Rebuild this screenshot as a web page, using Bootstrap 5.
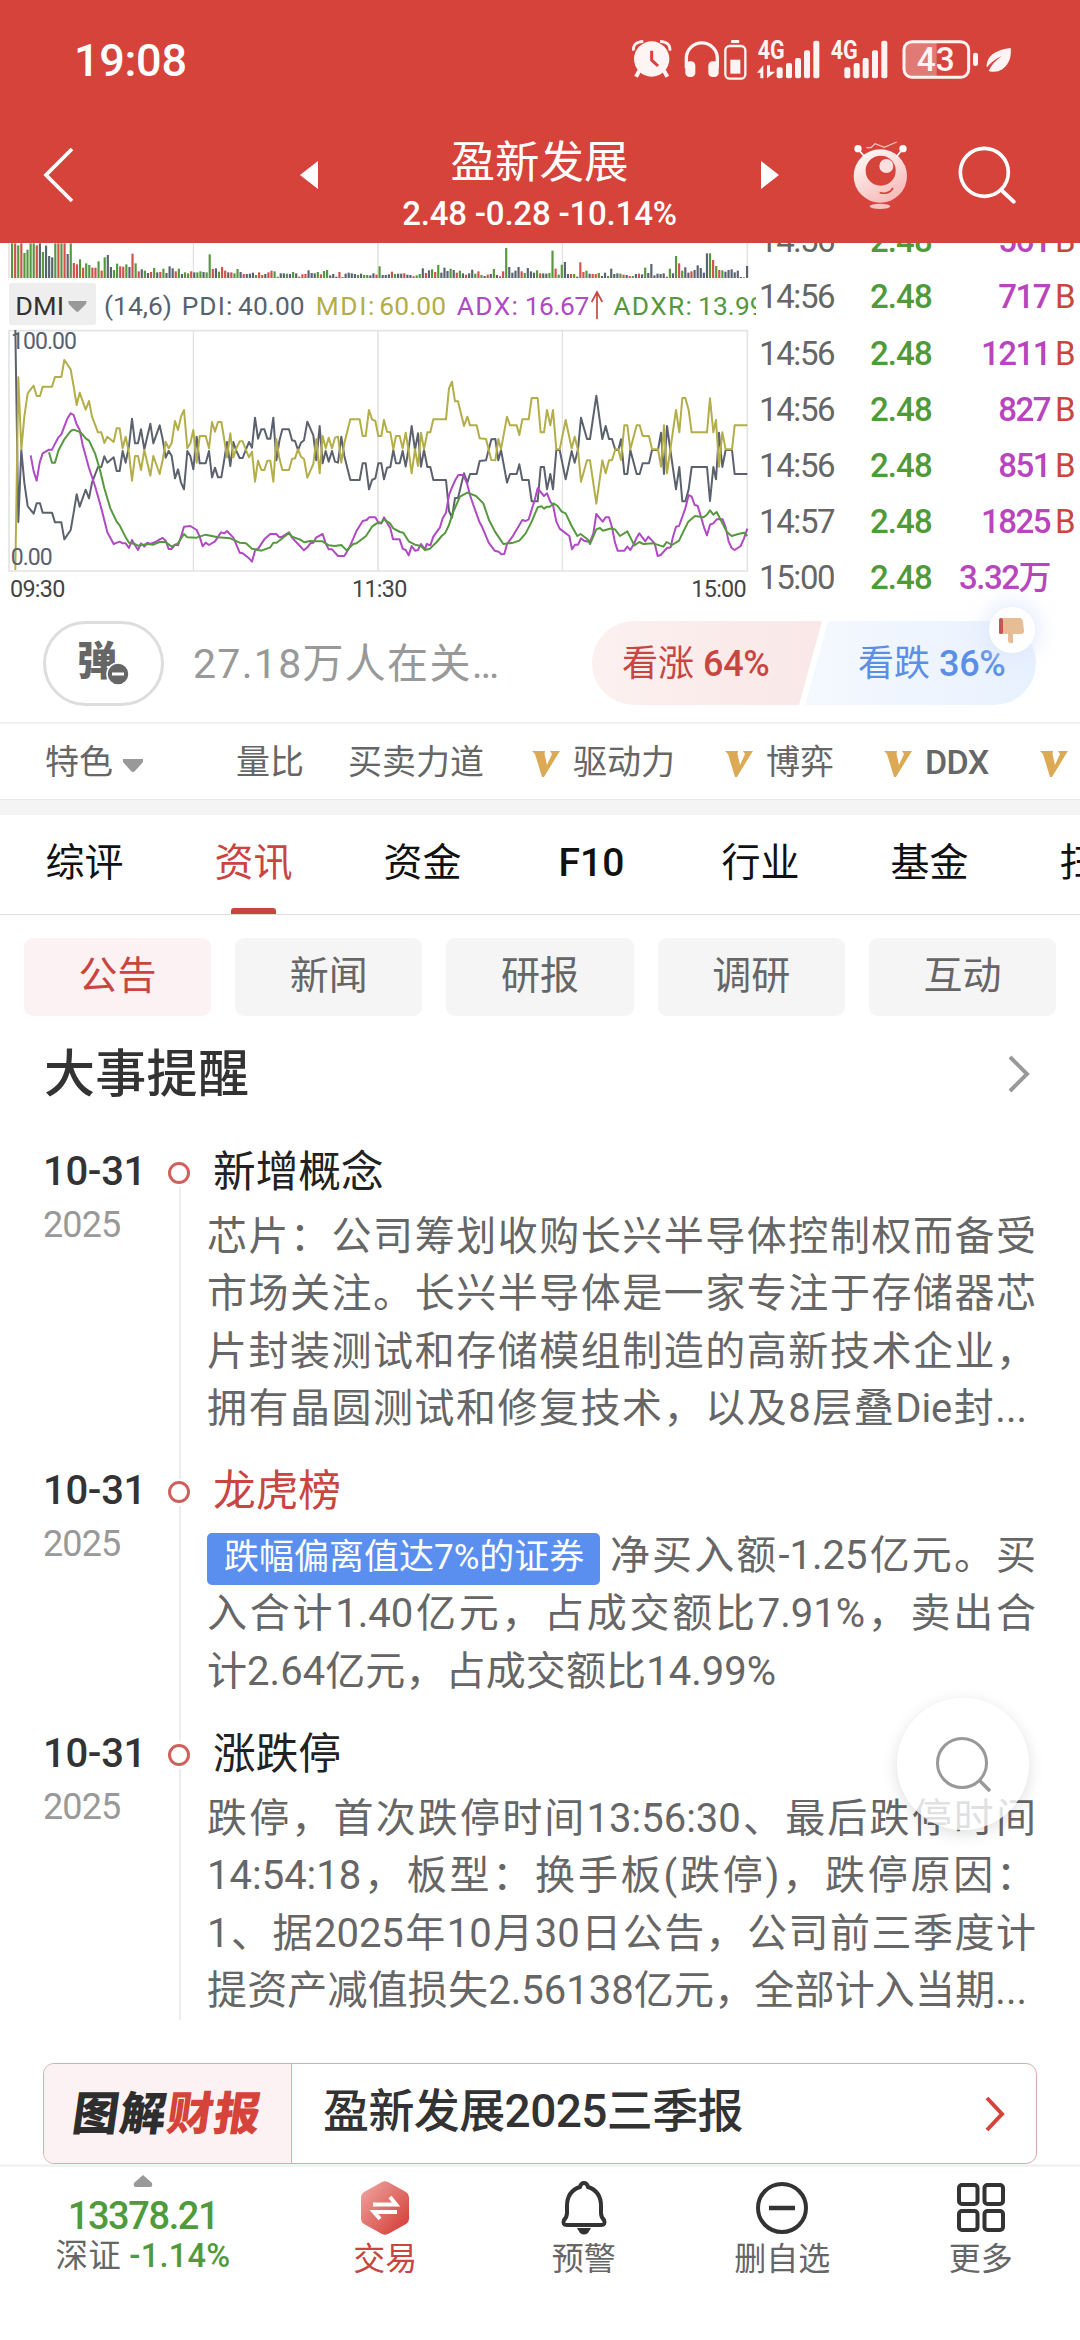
<!DOCTYPE html>
<html lang="zh-CN">
<head>
<meta charset="utf-8">
<meta name="viewport" content="width=device-width, initial-scale=1">
<title>盈新发展</title>
<link href="https://cdn.jsdelivr.net/npm/bootstrap@5.3.0/dist/css/bootstrap.min.css" rel="stylesheet">
<style>
body{font-family:Roboto,"Noto Sans CJK SC",sans-serif;width:1080px;height:2340px;overflow:hidden;background:#fff;color:#333;line-height:1;text-spacing-trim:space-all}
svg{display:block;flex:none}
svg text{font-family:Roboto,"Noto Sans CJK SC",sans-serif}
.red-head{height:243px;background:#d5433b;color:#fff;flex:none}
.status{height:120px;padding:41px 20px 0 74px}
.clock{font-size:45px;font-weight:500;letter-spacing:-.3px;line-height:40px}
.status svg{margin-top:-1px;overflow:visible}
.titlebar{height:123px;padding-left:43px}
.stock-name{font-size:44.5px;line-height:48px}
.stock-quote{font-size:33px;font-weight:500;line-height:34px;margin-top:10px;letter-spacing:-.2px;white-space:nowrap}
.market{height:363px;flex:none}
.ticks{width:320px;overflow:hidden;font-size:33px;font-weight:500}
.tick-row{height:56.1px;line-height:56.1px;flex:none;white-space:nowrap}
.t-time{width:111px;letter-spacing:-1.4px;color:#666;font-weight:400;margin-left:-1px}
.t-price{width:70px;color:#4f9a3b;letter-spacing:-.9px}
.t-vol{width:110px;text-align:right;color:#b845bd;letter-spacing:-1.5px}
.t-side{color:#c8463f;padding-left:5px;font-weight:400}
.vote-row{height:116px;padding:15px 43px 17px;flex:none}
.bullet-btn{width:121px;height:85px;border:3px solid #ddd;border-radius:43px}
.watchers{font-size:41px;color:#999;margin-left:29px;width:399px;letter-spacing:1.3px;white-space:nowrap;padding-top:3px}
.vote{height:84px;font-size:36px;line-height:87px;white-space:nowrap}
.vote-up{width:230px;height:84px;background:linear-gradient(90deg,#fcf0f0,#f9e8e7);color:#c8463f;border-radius:42px 0 0 42px;clip-path:polygon(0 0,100% 0,calc(100% - 23px) 100%,0 100%);padding-left:30px}
.vote-down{width:231px;height:84px;margin-left:-17px;background:linear-gradient(90deg,#f5f9ff,#e8f1fe);color:#5b8fe6;border-radius:0 42px 42px 0;clip-path:polygon(23px 0,100% 0,100% 100%,0 100%);padding-left:53px}
.vote b{font-weight:500;letter-spacing:-.3px;margin-left:9px}
.thumb{width:46px;height:46px;top:-14px;right:1px;border-radius:50%;background:#fff;box-shadow:0 0 16px 8px rgba(220,230,252,.55)}
.feat{height:78px;border-top:2px solid #f0f0f0;border-bottom:1px solid #ebebeb;font-size:34px;color:#666;padding-left:45px;white-space:nowrap;flex:none;overflow:hidden}
.vbar{width:1px;height:41px;background:#e8e8e8}
.feat .caret{margin:8px 46px 0 9px}
.feat .vip{margin:4px 13px 0 48px}
.ddx{font-weight:500;letter-spacing:-.6px}
.band{height:15px;background:#f4f4f4;flex:none}
.tabs-top{height:100px;border-bottom:1px solid #ddd;flex:none;overflow:hidden}
.tab-i{width:169px;flex:none;font-size:39px;line-height:97px;color:#111;text-align:center;position:relative;white-space:nowrap}
.tab-i.on{color:#c8463f}
.tab-i.on::after{content:"";position:absolute;left:62px;bottom:0;width:45px;height:6px;border-radius:3px 3px 0 0;background:#c8463f}
.chips{padding:23px 24px 0;gap:24px;flex:none}
.chip{flex:1 1 0;height:78px;border-radius:9px;background:#f5f5f5;color:#666;font-size:39px;line-height:77px;text-align:center}
.chip.on{background:#fdf2f3;color:#c8463f}
.sec-head{height:121px;padding:0 50px 5px 44px;flex:none}
.sec-title{font-size:51px;font-weight:500;color:#333;line-height:1;letter-spacing:.3px}
.tl-item{padding-bottom:18.5px}
.tl-date{width:164px;padding-left:43px;flex:none}
.tl-md{font-size:40px;font-weight:500;line-height:66px;padding-top:2px;letter-spacing:-.3px}
.tl-y{font-size:36px;color:#999;line-height:36px;letter-spacing:-.9px;padding-top:2px}
.tl-rail{width:32px;flex:none;position:relative}
.tl-rail::before{content:"";position:absolute;left:15px;top:50px;bottom:-41px;width:2px;background:#ececec}
.tl-item:last-child{padding-bottom:0}
.tl-item:last-child .tl-rail::before{bottom:0}
.tl-dot{position:absolute;left:4px;top:25px;width:22px;height:22px;border:3px solid #d0605c;border-radius:50%;background:#fff}
.tl-body{width:829px;margin-left:11px}
.tl-title{font-size:42.7px;line-height:66px;padding:2px 0 0 6px;color:#222;height:71px}
.tl-item:first-child .tl-title{height:70.5px}
.ln{display:block;height:57.6px;line-height:58px;font-size:40px;color:#666;text-align:justify;text-align-last:justify;white-space:nowrap}
.ln.short{width:820px}
.ln.end{width:569px}
.tagline{display:flex;align-items:center}
.blue-tag{background:#5a8ff0;color:#fff;font-size:35px;line-height:50px;height:52px;width:393px;border-radius:5px;padding:0 17px;flex:none;text-align-last:justify;margin-top:5px}
.tagline .rest{flex:1;margin-left:10px}
.report{margin:43px 43px 0;height:101px;border:1.5px solid #d6aeab;border-radius:11px;flex:none;overflow:hidden}
.report-tag{width:248px;height:100%;background:#fdf2f3;border-right:1px solid #d6aeab;font-size:46px;font-weight:900;color:#2e2e2e}
.skewed{transform:skewX(-8deg);letter-spacing:1.2px}
.skewed em{font-style:normal;color:#d5433b}
.report-title{font-size:46px;font-weight:500;margin-left:31px;width:662px;letter-spacing:-.6px;line-height:1;padding-bottom:5px}
.botnav{border-top:3px solid #f3f3f3;height:175px;flex:none}
.idx{width:286px;padding-top:8px}
.idx-val{font-size:38px;font-weight:500;color:#4f9a3b;line-height:44px;letter-spacing:-1.4px;margin-top:7px}
.idx-chg{font-size:32.5px;line-height:36px;color:#666;white-space:nowrap;letter-spacing:.3px}
.idx-chg b{font-weight:500;color:#4f9a3b}
.nav-b{width:198.5px;font-size:32px;color:#666;padding-top:13px}
.nav-b span{margin-top:5px;line-height:37px}
.float-search{position:absolute;left:897px;top:1698px;width:132px;height:132px;border-radius:50%;background:rgba(255,255,255,.8);box-shadow:0 4px 16px rgba(0,0,0,.13)}
</style>
<script src="https://cdn.jsdelivr.net/npm/bootstrap@5.3.0/dist/js/bootstrap.bundle.min.js"></script>
</head>
<body class="d-flex flex-column position-relative">
<header class="red-head">
  <div class="status d-flex justify-content-between">
    <span class="clock">19:08</span>
    <svg width="440" height="60" viewBox="0 60 1320 180">
      <g fill="#fff4f4" stroke="none">
        <circle cx="95" cy="117" r="53"/>
        <path d="M40 92Q38 66 70 64M150 92Q152 66 120 64" fill="none" stroke="#fff4f4" stroke-width="8"/>
        <path d="M58 152 48 170M132 152 142 170" stroke="#fff4f4" stroke-width="12"/>
        <path d="M95 92V120L114 138" fill="none" stroke="#d5433b" stroke-width="9"/>
        <path d="M199 145V115a46 46 0 0 1 93 0v30" fill="none" stroke="#fff4f4" stroke-width="10"/>
        <rect x="196" y="124" width="30" height="47" rx="13"/><rect x="265" y="124" width="31" height="47" rx="13"/>
        <rect x="316" y="78" width="60" height="98" rx="13" fill="none" stroke="#fff4f4" stroke-width="7"/><rect x="333" y="60" width="25" height="9" rx="3"/><rect x="331" y="119" width="30" height="42"/>
        <rect x="470" y="142" width="18" height="33" rx="6"/><rect x="498" y="129" width="18" height="46" rx="6"/><rect x="525" y="114" width="18" height="61" rx="6"/><rect x="552" y="91" width="18" height="84" rx="6"/><rect x="580" y="62" width="18" height="113" rx="6"/>
        <path d="M411 158 430 136V175H421V158ZM441 136V175L466 155H450V136Z"/>
        <rect x="673" y="142" width="18" height="33" rx="6"/><rect x="701" y="129" width="18" height="46" rx="6"/><rect x="728" y="114" width="18" height="61" rx="6"/><rect x="756" y="91" width="18" height="84" rx="6"/><rect x="784" y="62" width="18" height="113" rx="6"/>
        <path d="M857 66H950V172H870Q852 168 852 150V84Z" fill="#e17a74"/>
        <rect x="852" y="65" width="194" height="107" rx="24" fill="none" stroke="#fff4f4" stroke-width="9"/><rect x="1059" y="98" width="15" height="40" rx="7"/>
        <path d="M1172 84Q1112 92 1102 125 1098 138 1101 142 1120 118 1146 108 1118 126 1106 153 1128 160 1147 148C1168 132 1175 110 1172 84Z"/>
        <text x="413" y="118" font-size="75" font-weight="700" textLength="81" lengthAdjust="spacingAndGlyphs">4G</text>
        <text x="632" y="118" font-size="75" font-weight="700" textLength="81" lengthAdjust="spacingAndGlyphs">4G</text>
        <text x="890" y="154" font-size="102" font-weight="500" textLength="114" lengthAdjust="spacingAndGlyphs">43</text>
      </g>
    </svg>
  </div>
  <div class="titlebar d-flex align-items-start">
    <svg width="32" height="58" viewBox="0 0 32 58" style="margin-top:26px"><path d="M29 3 3 29 29 55" fill="none" stroke="#fff" stroke-width="3.8"/></svg>
    <svg width="18" height="28" viewBox="0 0 18 28" style="margin:41px 0 0 225px"><path d="M18 0V28L0 14Z" fill="#fff"/></svg>
    <div class="text-center" style="width:443px;padding-top:19px">
      <div class="stock-name">盈新发展</div>
      <div class="stock-quote">2.48 -0.28 -10.14%</div>
    </div>
    <svg width="18" height="28" viewBox="0 0 18 28" style="margin-top:41px"><path d="M0 0V28L18 14Z" fill="#fff"/></svg>
    <svg width="56" height="70" viewBox="696 364 168 210" style="margin:21px 0 0 74px">
      <defs><linearGradient id="bot" x1="0" y1="0" x2=".6" y2="1"><stop offset="0" stop-color="#fff"/><stop offset="1" stop-color="#f6bcba"/></linearGradient></defs>
      <circle cx="778" cy="469" r="80" fill="url(#bot)"/><circle cx="779" cy="453" r="45" fill="#d5433b"/><circle cx="796" cy="439" r="21" fill="#fbe0df"/>
      <path d="M776 519Q804 526 816 505" fill="none" stroke="#d5433b" stroke-width="5"/>
      <circle cx="711" cy="387" r="11" fill="#fff"/><circle cx="846" cy="387" r="11" fill="#fff"/><path d="M716 394 732 412M840 394 826 412" stroke="#fff" stroke-width="5"/>
      <path d="M736 384H750L762 372 790 383 827 367" fill="none" stroke="#f6c4c2" stroke-width="4"/><ellipse cx="777" cy="560" rx="31" ry="8" fill="#f6c4c2"/>
    </svg>
    <svg width="58" height="60" viewBox="1012 376 174 180" style="margin:25px 0 0 49px"><circle cx="1091" cy="458" r="72" fill="none" stroke="#fff" stroke-width="11"/><path d="M1143 512 1179 546" stroke="#fff" stroke-width="12" stroke-linecap="round"/></svg>
  </div>
</header>

<section class="market d-flex">
  <svg id="chart" width="760" height="363" viewBox="0 9 2280 1089">
    <g stroke="#e4e4e4" stroke-width="5" fill="none"><path d="M27 272H2242V993H27ZM1134 272V993M1134 9V114M27 9V114M2242 9V114"/><path d="M580 9V114M580 272V993M1687 9V114M1687 272V993" stroke-width="3" stroke="#ddd"/></g>
    <g id="bars"></g>
    <rect x="27" y="129" width="261" height="126" rx="8" fill="#eee"/>
    <path d="M205 183H260L258 192 236 214Q232 217 228 214L206 192Z" fill="#999"/>
    <g font-size="79">
      <text x="46" y="224" fill="#333" textLength="146" lengthAdjust="spacingAndGlyphs">DMI</text>
      <g fill="#58626f"><text x="312" y="224" textLength="204">(14,6)</text><text x="545" y="224" textLength="152">PDI:</text><text x="714" y="224" textLength="200">40.00</text></g>
      <g fill="#b3ad48"><text x="947" y="224" textLength="176">MDI:</text><text x="1138" y="224" textLength="200">60.00</text></g>
      <g fill="#b04ac4"><text x="1370" y="224" textLength="184">ADX:</text><text x="1574" y="224" textLength="194">16.67</text></g>
      <g fill="#56983e"><text x="1840" y="224" textLength="236">ADXR:</text><text x="2094" y="224" textLength="200">13.99</text></g>
    </g>
    <rect x="2268" y="140" width="12" height="110" fill="#fff"/>
    <path d="M1791 237V156M1775 186 1791 156 1807 186" fill="none" stroke="#c8463f" stroke-width="5"/>
    <g fill="none" stroke-width="6" stroke-linejoin="round" id="lines"></g>
    <g fill="#58626f" font-size="69"><text x="33" y="326" textLength="198">100.00</text><text x="32" y="974" textLength="126">0.00</text></g>
    <g fill="#444" font-size="70"><text x="30" y="1071" textLength="166">09:30</text><text x="1056" y="1071" textLength="166">11:30</text><text x="2074" y="1071" textLength="166">15:00</text></g>
  </svg>
  <div class="ticks d-flex flex-column justify-content-end">
    <div class="tick-row d-flex"><span class="t-time">14:56</span><span class="t-price">2.48</span><span class="t-vol">561</span><span class="t-side">B</span></div>
    <div class="tick-row d-flex"><span class="t-time">14:56</span><span class="t-price">2.48</span><span class="t-vol">717</span><span class="t-side">B</span></div>
    <div class="tick-row d-flex"><span class="t-time">14:56</span><span class="t-price">2.48</span><span class="t-vol">1211</span><span class="t-side">B</span></div>
    <div class="tick-row d-flex"><span class="t-time">14:56</span><span class="t-price">2.48</span><span class="t-vol">827</span><span class="t-side">B</span></div>
    <div class="tick-row d-flex"><span class="t-time">14:56</span><span class="t-price">2.48</span><span class="t-vol">851</span><span class="t-side">B</span></div>
    <div class="tick-row d-flex"><span class="t-time">14:57</span><span class="t-price">2.48</span><span class="t-vol">1825</span><span class="t-side">B</span></div>
    <div class="tick-row d-flex"><span class="t-time">15:00</span><span class="t-price">2.48</span><span class="t-vol">3.32万</span></div>
  </div>
</section>

<section class="vote-row d-flex">
  <div class="bullet-btn d-flex align-items-center justify-content-center">
    <svg width="54" height="48" viewBox="0 0 54 48"><text x="0" y="35" font-size="40" font-weight="900" fill="#666">弹</text><circle cx="41" cy="34" r="11" fill="#666" stroke="#fff" stroke-width="1.5"/><path d="M35 34H47" stroke="#fff" stroke-width="3"/></svg>
  </div>
  <div class="watchers align-self-center">27.18万人在关…</div>
  <div class="vote d-flex position-relative">
    <div class="vote-up">看涨<b>64%</b></div>
    <div class="vote-down">看跌<b>36%</b></div>
    <div class="thumb position-absolute d-flex align-items-center justify-content-center">
      <svg width="26" height="28" viewBox="0 0 26 28"><path d="M4 2H21Q23 2 24 6L25 15Q25 18 22 18H14V26Q14 28 11 27 9 27 9 24V18H4Z" fill="#e6bd94"/><rect x="0" y="2" width="4" height="16" rx="1.5" fill="#c8545a"/></svg>
    </div>
  </div>
</section>

<section class="feat d-flex align-items-center">
  <span>特色</span>
  <svg class="caret" width="22" height="14" viewBox="0 0 22 14"><path d="M1 0H21V3L13 12Q11 14 9 12L1 3Z" fill="#999"/></svg>
  <span class="vbar"></span>
  <span style="margin-left:46px">量比</span><span style="margin-left:44px">买卖力道</span>
  <svg class="vip" width="28" height="26" viewBox="0 0 28 26"><path id="v" d="M0 0H13L12.500 3 15 14 20 3 18 0H28L26 3 12 26H10L3 3Z" fill="#dcaa55"/></svg><span>驱动力</span>
  <svg class="vip" style="margin-left:50px" width="28" height="26" viewBox="0 0 28 26"><use href="#v"/></svg><span>博弈</span>
  <svg class="vip" style="margin-left:50px" width="28" height="26" viewBox="0 0 28 26"><use href="#v"/></svg><span class="ddx">DDX</span>
  <svg class="vip" style="margin-left:51px" width="28" height="26" viewBox="0 0 28 26"><use href="#v"/></svg>
</section>
<div class="band"></div>

<nav class="tabs-top d-flex">
  <div class="tab-i">综评</div><div class="tab-i on">资讯</div><div class="tab-i">资金</div><div class="tab-i" style="font-weight:500">F10</div><div class="tab-i">行业</div><div class="tab-i">基金</div><div class="tab-i">扫雷</div>
</nav>
<div class="chips d-flex">
  <div class="chip on">公告</div><div class="chip">新闻</div><div class="chip">研报</div><div class="chip">调研</div><div class="chip">互动</div>
</div>
<div class="sec-head d-flex align-items-center justify-content-between">
  <h2 class="sec-title m-0">大事提醒</h2>
  <svg width="22" height="38" viewBox="0 0 22 38"><path d="M2 2 19 19 2 36" fill="none" stroke="#999" stroke-width="4"/></svg>
</div>

<section class="flex-shrink-0">
  <article class="tl-item d-flex">
    <div class="tl-date"><div class="tl-md">10-31</div><div class="tl-y">2025</div></div>
    <div class="tl-rail"><i class="tl-dot"></i></div>
    <div class="tl-body">
      <div class="tl-title">新增概念</div>
      <span class="ln">芯片：公司筹划收购长兴半导体控制权而备受</span>
      <span class="ln">市场关注。长兴半导体是一家专注于存储器芯</span>
      <span class="ln">片封装测试和存储模组制造的高新技术企业，</span>
      <span class="ln short">拥有晶圆测试和修复技术，以及8层叠Die封...</span>
    </div>
  </article>
  <article class="tl-item d-flex">
    <div class="tl-date"><div class="tl-md">10-31</div><div class="tl-y">2025</div></div>
    <div class="tl-rail"><i class="tl-dot"></i></div>
    <div class="tl-body">
      <div class="tl-title" style="color:#c8463f">龙虎榜</div>
      <span class="ln tagline"><span class="blue-tag">跌幅偏离值达7%的证券</span><span class="rest">净买入额-1.25亿元。买</span></span>
      <span class="ln">入合计1.40亿元，占成交额比7.91%，卖出合</span>
      <span class="ln end">计2.64亿元，占成交额比14.99%</span>
    </div>
  </article>
  <article class="tl-item d-flex">
    <div class="tl-date"><div class="tl-md">10-31</div><div class="tl-y">2025</div></div>
    <div class="tl-rail"><i class="tl-dot"></i></div>
    <div class="tl-body">
      <div class="tl-title">涨跌停</div>
      <span class="ln">跌停，首次跌停时间13:56:30、最后跌停时间</span>
      <span class="ln">14:54:18，板型：换手板(跌停)，跌停原因：</span>
      <span class="ln">1、据2025年10月30日公告，公司前三季度计</span>
      <span class="ln short">提资产减值损失2.56138亿元，全部计入当期...</span>
    </div>
  </article>
</section>

<div class="report d-flex align-items-center">
  <div class="report-tag d-flex align-items-center justify-content-center"><div class="skewed">图解<em>财报</em></div></div>
  <div class="report-title">盈新发展2025三季报</div>
  <svg width="20" height="36" viewBox="0 0 20 36"><path d="M2 2 17 18 2 34" fill="none" stroke="#d5433b" stroke-width="4"/></svg>
</div>

<nav class="botnav d-flex">
  <div class="idx d-flex flex-column align-items-center">
    <svg width="20" height="12" viewBox="0 0 20 12"><path d="M10 0 19 8Q20 12 17 12H3Q0 12 1 8Z" fill="#999"/></svg>
    <div class="idx-val">13378.21</div>
    <div class="idx-chg">深证 <b>-1.14%</b></div>
  </div>
  <div class="nav-b d-flex flex-column align-items-center" style="color:#c8463f">
    <svg width="54" height="56" viewBox="0 0 54 56"><defs><linearGradient id="hx" x1="0" y1="0" x2="1" y2="1"><stop offset="0" stop-color="#efa9a5"/><stop offset="1" stop-color="#d3362f"/></linearGradient></defs><path d="M24 2Q27 .5 30 2L48 12Q51 14 51 17V39Q51 42 48 44L30 54Q27 55.500 24 54L6 44Q3 42 3 39V17Q3 14 6 12Z" fill="url(#hx)"/><path d="M15 24.500H38L32 17M39 32H16L22 39" fill="none" stroke="#fff" stroke-width="4"/></svg>
    <span>交易</span>
  </div>
  <div class="nav-b d-flex flex-column align-items-center">
    <svg width="54" height="56" viewBox="0 0 54 56"><path d="M27 3Q30 3 31 7C40 10 44 17 44 26V33Q44 37 47 40 49 45 44 45H10Q5 45 7 40 10 37 10 33V26C10 17 14 10 23 7Q24 3 27 3Z" fill="none" stroke="#333" stroke-width="4"/><path d="M20 48H34L31 53Q27 56 23 53Z" fill="#333"/></svg>
    <span>预警</span>
  </div>
  <div class="nav-b d-flex flex-column align-items-center">
    <svg width="54" height="56" viewBox="0 0 54 56"><circle cx="27" cy="28" r="24" fill="none" stroke="#333" stroke-width="4"/><path d="M14 28H40" stroke="#333" stroke-width="4.500"/></svg>
    <span>删自选</span>
  </div>
  <div class="nav-b d-flex flex-column align-items-center">
    <svg width="54" height="56" viewBox="0 0 54 56"><g fill="none" stroke="#333" stroke-width="4"><rect x="5" y="5" width="18.500" height="19" rx="3"/><rect x="30.500" y="5" width="18.500" height="19" rx="3"/><rect x="5" y="31" width="18.500" height="19" rx="3"/><rect x="30.500" y="31" width="18.500" height="19" rx="3"/></g></svg>
    <span>更多</span>
  </div>
</nav>

<div class="float-search d-flex align-items-center justify-content-center">
  <svg width="62" height="62" viewBox="0 0 62 62"><circle cx="30" cy="30" r="24.500" fill="none" stroke="#999" stroke-width="3"/><path d="M48 48 58 58" stroke="#999" stroke-width="3.500"/></svg>
</div>

<script>
// Volume bars: side letter (r = up, g = down, s = flat) and height
const vol="g104 r104 g98 r104 g75 g85 g104 g104 r98 s104 g78 s97 s66 s62 g104 r104 g104 r104 s72 g104 r45 r41 g56 r31 g44 g39 r31 r31 g50 r22 g62 s69 s33 g24 g43 r35 r34 g41 s33 r73 g44 r20 s26 g22 s15 r18 g30 s17 r18 g28 s15 s35 s29 r20 g28 s12 g17 g14 r20 s17 g17 g20 s18 g17 g71 r27 s29 g19 r33 r22 s17 r17 g14 g27 s18 r12 s12 s13 s16 g9 r17 r9 s12 r17 r22 g20 g4 s14 s14 g13 s12 g18 s14 r4 r11 r12 s23 s15 s14 g18 r11 g21 g24 s8 s12 s4 r18 g3 s13 s16 s14 s12 g9 s13 g9 g9 s8 s14 r10 g35 s9 s9 s11 r19 g12 s13 s13 r14 s10 s9 r5 g8 g12 s29 r15 s23 g26 r18 g39 s16 s31 s21 g28 s24 r16 g22 s14 r10 s14 s25 g13 r20 g9 s6 r10 s12 g27 s9 r5 r20 g90 s33 s16 s22 s33 r20 g15 s30 s20 s16 g23 r14 s14 s13 g15 g82 r28 g10 g40 s48 s12 r12 g12 s4 r47 r18 g22 s13 r12 r12 g15 s6 s16 g6 s28 s12 s14 g13 r10 s9 r6 g6 s12 r13 s11 g31 s15 s42 s8 s13 s12 s14 r4 g28 s14 g66 r44 g22 s32 s16 r20 s24 s38 s30 s16 s74 g74 r54 g36 r24 g23 s19 s24 s26 s17 s22 s3 g2 s36".split(" ");
const barColor={r:"#d0524a",g:"#56983e",s:"#58646f"};
document.getElementById("bars").innerHTML=vol.map((b,i)=>{const h=+b.slice(1),x=33+i*(2205/(vol.length-1));return `<rect x="${x.toFixed(1)}" y="${114-h}" width="6.500" height="${h}" fill="${barColor[b[0]]}"/>`}).join("");
const mdi="46,990 55,412 64,628 73,530 83,460 92,448 101,437 110,468 120,468 128,440 156,440 165,411 184,411 193,360 212,388 221,440 230,495 239,458 257,509 267,483 276,530 294,577 304,577 313,609 322,590 341,606 350,565 359,565 368,625 377,590 387,640 396,722 405,648 414,648 423,690 433,630 451,707 460,648 479,702 488,660 497,605 506,625 515,610 525,543 534,570 543,530 552,510 562,625 571,610 580,570 590,668 599,588 617,588 627,625 636,546 645,575 654,546 664,546 673,600 681,652 691,580 700,652 709,625 719,604 728,604 738,630 747,652 756,635 765,725 774,662 784,690 793,690 802,662 811,662 820,725 829,597 838,655 847,690 867,690 876,657 885,655 894,628 903,650 912,657 922,713 940,672 949,597 959,700 968,588 977,625 986,593 996,625 1005,593 1014,590 1024,668 1033,610 1051,538 1079,538 1088,588 1097,588 1107,510 1116,538 1126,543 1135,588 1144,588 1152,540 1161,575 1171,577 1180,628 1188,588 1199,588 1208,625 1217,578 1227,640 1235,700 1245,628 1254,678 1263,578 1272,628 1282,577 1291,577 1300,538 1338,538 1347,445 1356,425 1365,484 1374,484 1392,558 1402,530 1410,556 1430,556 1439,595 1458,597 1474,660 1486,661 1495,597 1503,628 1521,530 1530,556 1550,556 1558,585 1567,538 1586,538 1595,474 1613,474 1622,577 1632,577 1641,510 1651,556 1659,510 1669,628 1679,628 1697,540 1715,625 1724,590 1734,630 1743,725 1761,661 1770,661 1789,791 1807,661 1817,700 1827,661 1836,661 1846,628 1855,628 1863,660 1873,556 1882,556 1891,628 1910,556 1919,556 1928,588 1947,588 1956,628 1974,628 1983,680 1992,556 2001,700 2011,628 2028,510 2038,577 2047,474 2056,474 2066,510 2075,577 2121,577 2130,475 2140,577 2148,540 2157,680 2167,577 2177,628 2196,628 2204,556 2242,556";
// PDI mirrors MDI around the 50 level
const pdi=mdi.split(" ").map((p,i)=>{const [x,y]=p.split(",");return x+","+Math.max(270,1258-y)}).join(" ");
const adx="92,646 101,694 110,722 119,668 128,640 147,629 156,629 175,592 184,583 202,536 212,520 221,525 230,553 239,570 248,615 267,684 285,738 304,805 322,877 341,912 359,905 368,910 377,910 387,924 396,900 405,916 414,930 423,910 433,920 442,908 451,912 470,904 479,898 488,894 497,902 506,927 515,927 525,914 534,916 543,890 552,860 571,858 590,870 599,890 608,919 617,908 627,915 645,904 663,877 673,880 681,873 700,893 709,914 719,938 728,940 747,955 756,965 765,932 775,925 793,898 811,882 829,882 838,892 847,890 867,877 876,893 894,912 912,931 922,922 931,910 940,908 949,892 968,882 977,910 986,928 996,928 1014,948 1033,948 1047,925 1060,895 1070,872 1088,843 1100,840 1107,832 1126,832 1134,845 1144,850 1152,832 1161,848 1171,865 1179,898 1199,898 1208,926 1217,930 1226,946 1235,918 1245,932 1254,930 1263,912 1275,928 1280,912 1291,916 1300,890 1320,862 1328,835 1338,818 1347,765 1356,742 1366,720 1375,705 1390,705 1401,730 1410,765 1420,795 1438,845 1447,862 1466,908 1484,932 1496,935 1504,943 1513,942 1521,912 1540,886 1567,840 1577,843 1586,838 1604,780 1613,745 1632,768 1641,760 1651,785 1659,795 1669,845 1679,866 1708,888 1716,928 1725,914 1734,914 1743,895 1752,902 1770,906 1780,880 1789,822 1808,845 1817,832 1827,832 1836,862 1845,908 1853,932 1873,932 1882,920 1891,930 1900,915 1909,895 1918,880 1936,904 1945,890 1964,910 1973,948 1982,945 2001,924 2012,922 2019,890 2028,860 2037,858 2056,805 2066,765 2075,770 2084,795 2093,797 2112,862 2121,886 2130,854 2140,850 2150,838 2168,838 2177,862 2186,905 2195,924 2204,930 2222,918 2232,895 2242,866";
const adxr="147,637 156,668 165,668 175,632 193,598 212,573 221,569 242,577 257,595 267,602 285,640 300,690 313,745 331,805 350,845 359,856 377,892 387,908 405,912 414,917 442,912 460,914 479,906 497,906 515,920 534,910 552,882 562,892 590,893 617,884 654,892 691,895 719,908 738,910 756,926 784,932 811,922 820,908 830,908 867,879 876,890 903,900 912,907 931,903 950,904 968,904 986,916 1005,918 1024,915 1040,931 1060,912 1070,910 1098,888 1116,860 1130,850 1142,850 1152,838 1170,850 1180,865 1200,876 1210,878 1226,904 1245,914 1263,918 1275,930 1290,926 1310,906 1325,888 1335,880 1347,855 1360,815 1380,770 1402,758 1428,768 1450,790 1467,840 1485,875 1510,912 1540,908 1558,902 1577,880 1595,845 1613,802 1625,799 1632,806 1641,800 1650,800 1660,790 1673,798 1685,815 1697,820 1715,858 1732,888 1742,882 1765,900 1770,912 1789,868 1800,864 1808,872 1835,865 1845,868 1860,888 1882,874 1903,916 1918,906 1930,912 1960,910 1990,920 2000,906 2016,915 2037,902 2050,875 2065,845 2085,828 2110,832 2120,825 2130,811 2140,824 2150,816 2180,875 2195,888 2215,882 2232,878 2242,888";
document.getElementById("lines").innerHTML=[[pdi,"#5b626e"],[mdi,"#b3ae4a"],[adx,"#b04ac4"],[adxr,"#56983e"]].map(([p,c])=>`<polyline points="${p}" stroke="${c}"/>`).join("");
</script>
</body>
</html>
